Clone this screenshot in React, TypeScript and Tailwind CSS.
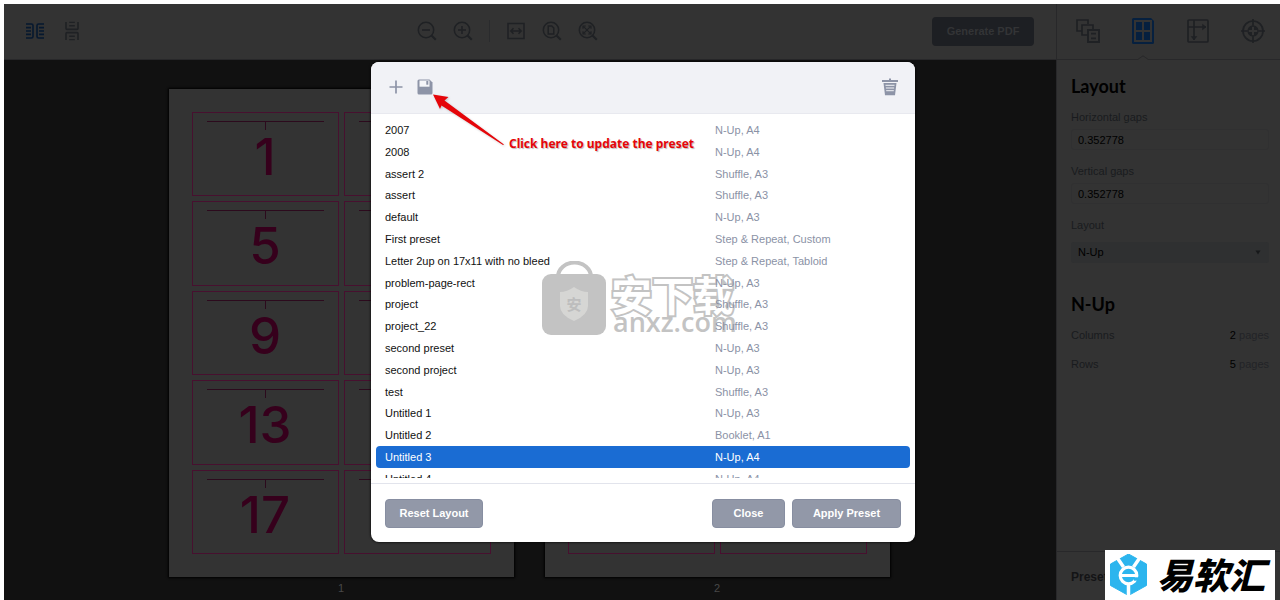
import { useState, type ReactNode } from 'react'
import clsx from 'clsx'

type Preset = { name: string; layout: string }

const PRESETS: Preset[] = [
  { name: '2007', layout: 'N-Up, A4' },
  { name: '2008', layout: 'N-Up, A4' },
  { name: 'assert 2', layout: 'Shuffle, A3' },
  { name: 'assert', layout: 'Shuffle, A3' },
  { name: 'default', layout: 'N-Up, A3' },
  { name: 'First preset', layout: 'Step & Repeat, Custom' },
  { name: 'Letter 2up on 17x11 with no bleed', layout: 'Step & Repeat, Tabloid' },
  { name: 'problem-page-rect', layout: 'N-Up, A3' },
  { name: 'project', layout: 'Shuffle, A3' },
  { name: 'project_22', layout: 'Shuffle, A3' },
  { name: 'second preset', layout: 'N-Up, A3' },
  { name: 'second project', layout: 'N-Up, A3' },
  { name: 'test', layout: 'Shuffle, A3' },
  { name: 'Untitled 1', layout: 'N-Up, A3' },
  { name: 'Untitled 2', layout: 'Booklet, A1' },
  { name: 'Untitled 3', layout: 'N-Up, A4' },
  { name: 'Untitled 4', layout: 'N-Up, A4' },
]

const SHEETS: { label: string; pages: (number | null)[] }[] = [
  { label: '1', pages: [1, null, 5, null, 9, null, 13, null, 17, null] },
  { label: '2', pages: [null, null, null, null, null, null, null, null, null, null] },
]

function IconButton({ label, className, children }: { label: string; className?: string; children: ReactNode }) {
  return (
    <button type="button" aria-label={label} className={clsx('flex items-center justify-center', className)}>
      {children}
    </button>
  )
}

function Magnifier({ children }: { children: ReactNode }) {
  return (
    <svg width="20" height="20" viewBox="0 0 20 20" fill="none" stroke="currentColor" strokeWidth="1.5">
      <circle cx="9" cy="9" r="7.7" />
      <path d="M14.5 14.5 L18.8 18.8" strokeWidth="2" />
      {children}
    </svg>
  )
}

function Toolbar() {
  return (
    <header className="flex h-14 shrink-0 items-center justify-between border-b border-[#28282a] bg-[#333333] pr-[22px] pb-px pl-[18px] text-[#1f2124]">
      <div className="flex items-center gap-4">
        <IconButton label="Spread view" className="w-[26px] text-[#06182f]">
          <svg width="20" height="16" viewBox="0 0 20 16" fill="none" stroke="currentColor" strokeWidth="1.6">
            <path d="M1 1h5.4q1.6 0 1.6 1.6v10.8q0 1.6-1.6 1.6H1M19 1h-5.4q-1.6 0-1.6 1.6v10.8q0 1.6 1.6 1.6H19" />
            <path d="M1 4.6h5M1 8h5M1 11.4h5M14 4.6h5M14 8h5M14 11.4h5" />
          </svg>
        </IconButton>
        <IconButton label="Stacked view" className="w-[16px]">
          <svg width="14" height="20" viewBox="0 0 14 20" fill="none" stroke="currentColor" strokeWidth="1.6">
            <path d="M1 1v6.4q0 1 1 1h10q1 0 1-1V1M1 19v-6.4q0-1 1-1h10q1 0 1 1V19" />
            <path d="M4.2 1.4h5.6M4.2 4.8h5.6M4.2 15.2h5.6M4.2 18.6h5.6" strokeWidth="1.4" />
          </svg>
        </IconButton>
      </div>
      <div className="flex items-center gap-4 pl-0.5">
        <IconButton label="Zoom out">
          <Magnifier><path d="M5 9h8" /></Magnifier>
        </IconButton>
        <IconButton label="Zoom in">
          <Magnifier><path d="M5 9h8M9 5v8" /></Magnifier>
        </IconButton>
        <span className="h-[22px] w-px bg-[#2a2b2d]" />
        <IconButton label="Fit width">
          <svg width="20" height="18" viewBox="0 0 20 18" fill="none" stroke="currentColor" strokeWidth="1.5">
            <path d="M2 1.5h16v15H2zM5 9h10M7.5 6.2 4.8 9l2.7 2.8M12.5 6.2 15.2 9l-2.7 2.8" />
          </svg>
        </IconButton>
        <IconButton label="Fit page">
          <Magnifier><path d="M6.2 5h3.6l2 2v6H6.2z" /></Magnifier>
        </IconButton>
        <IconButton label="Actual size">
          <Magnifier><path d="M5.6 5.6l6.8 6.8M12.4 5.6l-6.8 6.8M5 7.8V5h2.8M10.2 5H13v2.8M5 10.2V13h2.8M10.2 13H13v-2.8" strokeWidth="1.2" /></Magnifier>
        </IconButton>
      </div>
      <button type="button" className="h-[29px] w-[102px] rounded-[4px] bg-[#1d1f23] text-[11px] font-bold text-[#333436]">
        Generate PDF
      </button>
    </header>
  )
}

function PageCell({ page }: { page: number | null }) {
  return (
    <div className="flex flex-col items-center border border-[#47102f] px-[14px] pt-2 text-[#36001c]">
      <div className="h-px w-full bg-[#2c0a1d]" />
      <div className="h-2 w-px bg-[#2c0a1d]" />
      {page !== null && (
        <span className="font-['Inter',sans-serif] text-[51px] leading-[54px] font-medium">{page}</span>
      )}
    </div>
  )
}

function Canvas() {
  return (
    <main className="flex flex-1 justify-center gap-[31px] bg-[#111111] pt-[29px] pr-0.5">
      {SHEETS.map(sheet => (
        <figure key={sheet.label} className="w-[345px]">
          <div className="grid h-[488px] grid-cols-2 grid-rows-5 gap-[5px] bg-[#333333] p-[23px] shadow-[0_0_2px_1px_#000]">
            {sheet.pages.map((page, i) => <PageCell key={i} page={page} />)}
          </div>
          <figcaption className="pt-1 text-center text-[11px] leading-[14px] text-[#484848]">{sheet.label}</figcaption>
        </figure>
      ))}
    </main>
  )
}

function SidebarTabs() {
  return (
    <nav className="flex h-14 shrink-0 border-b border-[#28282a] pb-px pl-[3px] text-[#1f2124]">
      <IconButton label="Documents" className="flex-1">
        <svg width="26" height="26" viewBox="0 0 26 26" fill="none" stroke="currentColor" strokeWidth="1.7">
          <path d="M7 13H2V2h11v4M13 17H7V7h11v5" />
          <path d="M13 12h11v12H13zM16 15.6h5M16 20.4h5" strokeWidth="1.9" />
        </svg>
      </IconButton>
      <div className="relative flex flex-1">
        <IconButton label="Layout" className="flex-1 text-[#06203f]">
          <svg width="22" height="26" viewBox="0 0 22 26" fill="currentColor">
            <path fillRule="evenodd" d="M0 1.5Q0 0 1.5 0H19l3 3v21.500Q22 26 20.500 26H1.500Q0 26 0 24.500zM2 2v22h18V2z" />
            <path d="M4 4h6v8H4zM12 4h6v8h-6zM4 14h6v8H4zM12 14h6v8h-6z" />
          </svg>
        </IconButton>
        <svg className="absolute -bottom-0.5 left-1/2 -translate-x-1/2" width="12" height="5" viewBox="0 0 12 5">
          <path d="M0 5 6 .8 12 5" fill="#333333" stroke="#28282a" />
        </svg>
      </div>
      <IconButton label="Marks" className="flex-1">
        <svg width="22" height="24" viewBox="0 0 22 24" fill="none" stroke="currentColor" strokeWidth="1.7">
          <rect x="1" y="1" width="20" height="22" rx="1" />
          <path d="M7 1v20M1 8h18" />
          <path d="M4.200 17.500 7 21l2.800-3.500zM15.500 5.200 19 8l-3.500 2.800z" fill="currentColor" strokeWidth=".5" />
        </svg>
      </IconButton>
      <IconButton label="Registration" className="flex-1">
        <svg width="26" height="26" viewBox="0 0 26 26" fill="none" stroke="currentColor" strokeWidth="1.7">
          <circle cx="13" cy="13" r="10" />
          <path d="M13 1v8M13 17v8M1 13h8M17 13h8" />
          <path d="M12 7.500v4.500H7.500A6 6 0 0 1 12 7.500zM14 7.500v4.500h4.500A6 6 0 0 0 14 7.500zM12 18.500V14H7.500A6 6 0 0 0 12 18.500zM14 18.500V14h4.500A6 6 0 0 1 14 18.500z" fill="currentColor" stroke="none" />
        </svg>
      </IconButton>
    </nav>
  )
}

const headingClass = "font-['Lato',sans-serif] text-[18px] leading-6 font-bold text-black"
const labelClass = 'block text-[11px] leading-4 text-[#191b1e]'
const fieldClass = 'mt-1 mb-[13px] h-[21px] w-full rounded-[3px] border border-[#303031] bg-[#333333] px-1.5 text-[11px] text-black'

function Sidebar() {
  const [horizontal, setHorizontal] = useState('0.352778')
  const [vertical, setVertical] = useState('0.352778')

  return (
    <aside className="flex w-[224px] shrink-0 flex-col border-l border-[#28282a] bg-[#333333]">
      <SidebarTabs />
      <div className="flex-1 pt-[14px] pr-[11px] pl-[14px]">
        <h2 className={headingClass}>Layout</h2>
        <label htmlFor="h-gaps" className={clsx(labelClass, 'mt-[11px]')}>Horizontal gaps</label>
        <input id="h-gaps" value={horizontal} onChange={e => setHorizontal(e.target.value)} className={fieldClass} />
        <label htmlFor="v-gaps" className={labelClass}>Vertical gaps</label>
        <input id="v-gaps" value={vertical} onChange={e => setVertical(e.target.value)} className={fieldClass} />
        <label htmlFor="layout" className={labelClass}>Layout</label>
        <div className="relative mt-[9px]">
          <select id="layout" className="block h-[21px] w-full appearance-none rounded-[3px] bg-[#2f3031] px-[7px] text-[11px] text-black">
            <option>N-Up</option>
          </select>
          <svg className="pointer-events-none absolute top-2 right-2" width="6" height="5" viewBox="0 0 6 5" fill="#17181a">
            <path d="M.5.500h5L3 4.500z" />
          </svg>
        </div>
        <h2 className={clsx(headingClass, 'mt-[29px]')}>N-Up</h2>
        <dl className="mt-[11px] space-y-[13px] text-[11px] leading-4 text-[#191b1e]">
          <div className="flex justify-between">
            <dt>Columns</dt>
            <dd className="text-[#222327]"><span className="text-black">2</span> pages</dd>
          </div>
          <div className="flex justify-between">
            <dt>Rows</dt>
            <dd className="text-[#222327]"><span className="text-black">5</span> pages</dd>
          </div>
        </dl>
      </div>
      <footer className="flex h-[49px] items-center border-t border-[#28282a] pt-0.5 pl-[14px]">
        <span className="text-[12px] font-bold text-[#131416]">Presets</span>
      </footer>
    </aside>
  )
}

function Watermark() {
  return (
    <div className="pointer-events-none absolute top-[199px] left-[171px] flex items-start gap-1 text-[#c3c3c3]">
      <svg width="65" height="74" viewBox="0 0 65 74">
        <path d="M16 16a16 14 0 0 1 33 0" fill="none" stroke="currentColor" strokeWidth="4" />
        <rect y="13" width="64" height="61" rx="9" fill="currentColor" />
        <path d="M32 26q7 5 14 5v14q0 9-14 15-14-6-14-15V31q7 0 14-5z" fill="#d6d6d4" />
        <text x="32" y="49" textAnchor="middle" fontSize="15" fill="#bdbdbd" fontFamily="'Noto Sans CJK SC', sans-serif" fontWeight="700">安</text>
      </svg>
      <div className="pt-[13px]">
        <p className="font-['Noto_Sans_CJK_SC',sans-serif] text-[41px] leading-[38px] font-bold text-white [paint-order:stroke] [-webkit-text-stroke:4px_#c3c3c3]">安下载</p>
        <p className="pl-0.5 font-['Open_Sans',sans-serif] text-[27px] leading-[20px] font-semibold">anxz.com</p>
      </div>
    </div>
  )
}

function Callout() {
  return (
    <div className="pointer-events-none absolute top-8 left-[61px] flex items-start gap-1">
      <svg width="73" height="52" viewBox="0 0 73 52" fill="#e50509" className="drop-shadow-[1px_1px_1px_#0003]">
        <path d="M1 0.500 16.500 3 12.500 6.500 72 50.500 71 51 9.500 11.500 8 15z" />
      </svg>
      <span className="pt-10 font-['Noto_Sans',sans-serif] text-[12px] leading-[20px] font-bold whitespace-nowrap text-[#e50509] [text-shadow:1px_1px_1px_#bbb]">
        Click here to update the preset
      </span>
    </div>
  )
}

const modalButtonClass = 'h-[29px] rounded-[4px] border border-[#878ea1] bg-[#9298a8] text-[11px] font-bold text-white'

function PresetDialog() {
  const [selected, setSelected] = useState('Untitled 3')

  return (
    <div role="dialog" aria-label="Presets" className="relative flex w-[544px] flex-col rounded-lg bg-white shadow-[0_0_2px_1px_#0008]">
      <div className="flex h-[52px] items-center justify-between rounded-t-lg border-b border-[#e8e9ef] bg-[#f1f2f6] pr-4 pb-px pl-[18px] text-[#8d94a7]">
        <div className="flex items-center gap-[14px]">
          <IconButton label="Add preset">
            <svg width="14" height="14" viewBox="0 0 14 14" stroke="currentColor" strokeWidth="1.7">
              <path d="M7 .500v13M.500 7h13" />
            </svg>
          </IconButton>
          <IconButton label="Update preset">
            <svg width="16" height="16" viewBox="0 0 16 16">
              <path d="M2 .500h10.500l3 3V14q0 1.500-1.500 1.500H2Q.500 15.500.500 14V2Q.500.500 2 .500z" fill="currentColor" />
              <path d="M2.500 1.500h10v6.200h-10z" fill="#f5f6f9" />
              <path d="M9.300 2h2v3.700h-2z" fill="currentColor" />
            </svg>
          </IconButton>
        </div>
        <IconButton label="Delete preset">
          <svg width="18" height="18" viewBox="0 0 18 18">
            <path d="M8 .500h2V2h7v2H1V2h7zM2.500 5h13L14 17.300H4z" fill="currentColor" />
            <path d="M4.500 7.300h9M4.900 10h8.200M5.200 12.700h7.600" stroke="#f1f2f6" strokeWidth="1" />
          </svg>
        </IconButton>
      </div>

      <Watermark />

      <div className="relative h-[364px] overflow-hidden px-[5px] pt-[5px]">
        <table className="h-[371px] w-full table-fixed border-separate border-spacing-0 text-left text-[11px] leading-4">
          <tbody>
            {PRESETS.map(preset => {
              const active = preset.name === selected
              return (
                <tr key={preset.name} onClick={() => setSelected(preset.name)}>
                  <td className={clsx('w-[339px] rounded-l-[4px] p-0 pl-[9px]', active ? 'bg-[#1a6cd3] text-white' : 'text-[#111111]')}>
                    {preset.name}
                  </td>
                  <td className={clsx('rounded-r-[4px] p-0', active ? 'bg-[#1a6cd3] text-white' : 'text-[#8b92a6]')}>
                    {preset.layout}
                  </td>
                </tr>
              )
            })}
          </tbody>
        </table>
      </div>

      <div className="mt-[5px] flex h-[59px] items-center gap-[7px] border-t border-[#e2e4ec] px-[14px]">
        <button type="button" className={clsx(modalButtonClass, 'mr-auto w-[98px]')}>Reset Layout</button>
        <button type="button" className={clsx(modalButtonClass, 'w-[73px]')}>Close</button>
        <button type="button" className={clsx(modalButtonClass, 'w-[109px]')}>Apply Preset</button>
      </div>

      <Callout />
    </div>
  )
}

function SiteBadge() {
  return (
    <div className="absolute right-[5px] bottom-0 flex h-[50px] w-[170px] items-center gap-[10px] bg-white pl-[5px]">
      <svg width="37" height="42" viewBox="0 0 37 42">
        <path d="M18.500 0 36.500 10v21.500L18.500 41.500.500 31.500V10z" fill="#2cb5ee" stroke="#2cb5ee" strokeLinejoin="round" />
        <path d="M6 2 13.500 13M31 2 23.500 13M18.500 31v11" stroke="#fff" strokeWidth="3.500" />
        <circle cx="18.500" cy="21.500" r="8.300" fill="#2cb5ee" stroke="#fff" strokeWidth="3.200" />
        <path d="M11 21.500h15" stroke="#fff" strokeWidth="3" />
        <path d="M24 23.300h6v3.400h-6z" fill="#2cb5ee" />
      </svg>
      <span className="pb-1 font-['Noto_Sans_CJK_SC',sans-serif] text-[36px] leading-[46px] font-black whitespace-nowrap text-black italic">易软汇</span>
    </div>
  )
}

export default function App() {
  return (
    <div className="relative h-screen overflow-hidden bg-white pt-1 pl-1 font-['Liberation_Sans',Arial,sans-serif]">
      <div className="flex h-full">
        <div className="flex min-w-0 flex-1 flex-col">
          <Toolbar />
          <Canvas />
        </div>
        <Sidebar />
      </div>
      <div className="absolute inset-0 flex items-start justify-center pt-[62px] pl-1.5">
        <PresetDialog />
      </div>
      <SiteBadge />
    </div>
  )
}
